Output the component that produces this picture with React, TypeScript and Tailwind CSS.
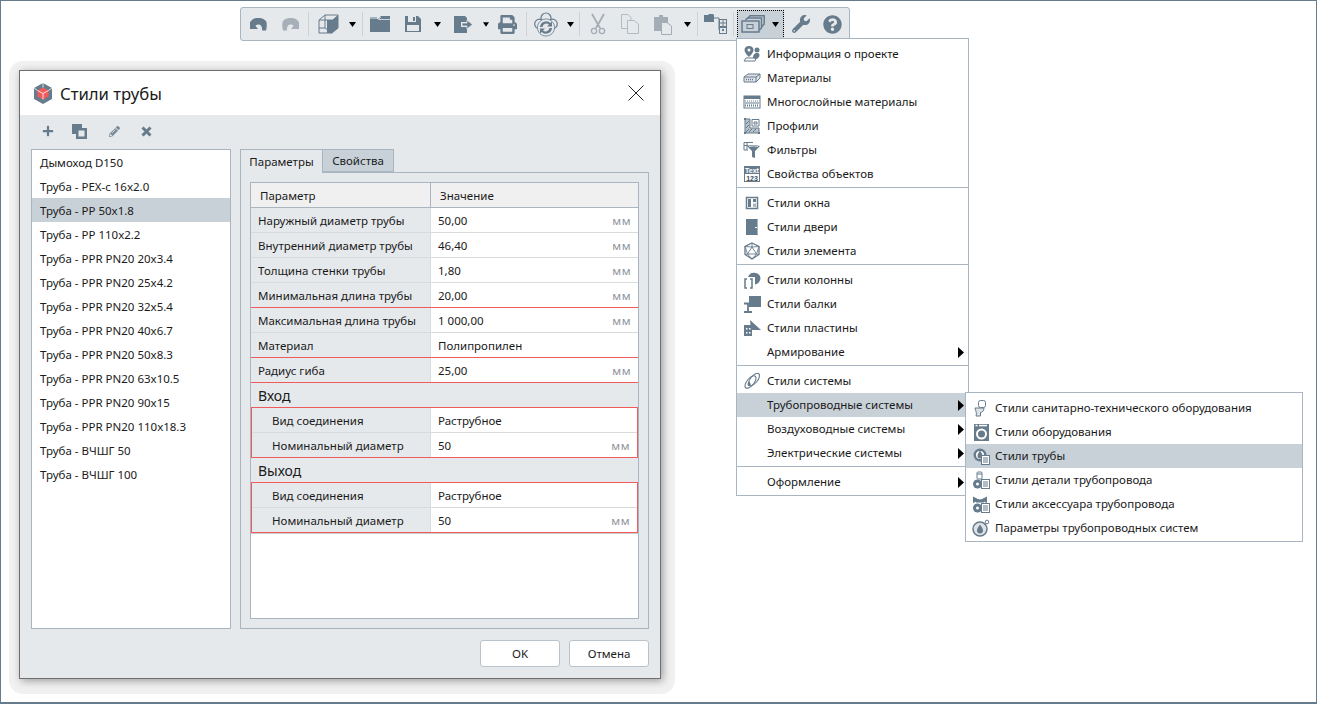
import type { ReactNode } from "react";
import { FaPrint, FaWrench, FaQuestionCircle, FaPlus, FaPencilAlt } from "react-icons/fa";

const C = "#667b8c";

const Svg = ({ w = 18, h = 18, vb, children }: { w?: number; h?: number; vb?: string; children: ReactNode }) => (
  <svg width={w} height={h} viewBox={vb ?? `0 0 ${w} ${h}`} fill="none" className="block shrink-0">
    {children}
  </svg>
);

// toolbar icons
const Undo = ({ color = C, flip = false }: { color?: string; flip?: boolean }) => (
  <svg width="17" height="13" viewBox="0 0 17 13" className={flip ? "block -scale-x-100" : "block"}>
    <path fill={color} d="M0 4 L3 1 C7 -1 13 -0.5 16 3 C17 5 17 9 16 12.5 L12 12.5 C12.5 9 11 6.5 8.500 6.500 C7 6.500 6 7 5.500 8 L8 11 L0 11 Z" />
  </svg>
);
const Box3d = () => (
  <Svg w={21} h={20}>
    <path d="M1 6 L7 1 H20 V14 L14 19 H1 Z M7 1 V14 H1 M7 14 L14 19 M1 6 H14 V19" stroke={C} strokeWidth="1" />
    <path d="M9 6 L14 6 L20 1 V14 L14 19 H9 Z" fill={C} />
  </Svg>
);
const Folder = () => (
  <Svg w={20} h={16}>
    <path d="M0 3 V16 H20 V0 H11 L8 3 Z" fill={C} />
    <path d="M0 2 H7" stroke={C} />
    <path d="M11 1 L8.500 3.500 H20" stroke="#e6e9ec" strokeWidth="0.8" />
  </Svg>
);
const Floppy = () => (
  <Svg w={16} h={16}>
    <path d="M0 0 H13 L16 3 V16 H0 Z" fill={C} />
    <rect x="3" y="0" width="8" height="6" fill="#e6e9ec" />
    <rect x="8" y="1" width="2" height="4" fill={C} />
    <rect x="2" y="9" width="12" height="6" fill="#e6e9ec" />
  </Svg>
);
const ExportIcon = () => (
  <Svg w={19} h={17}>
    <path d="M0 0 H11 L13 2 V6 H7 V11 H13 V17 H0 Z" fill={C} />
    <path d="M8 7 H13 V4 L18.500 8.500 L13 13 V10 H8 Z" fill={C} stroke="#e6e9ec" strokeWidth="0.8" />
  </Svg>
);
const CloudSync = () => (
  <Svg w={24} h={25}>
    <g stroke={C} strokeWidth="1.200" fill="#e6e9ec">
      <circle cx="12" cy="6" r="5" />
      <circle cx="5.500" cy="12" r="4.800" />
      <circle cx="18.500" cy="12" r="4.800" />
    </g>
    <circle cx="12" cy="15.500" r="8.600" fill="#e6e9ec" stroke={C} strokeWidth="0.800" />
    <path d="M6 15 A6.200 6.200 0 0 1 16.500 11 L18 9.500 V14.500 H13 L15 12.500 A4 4 0 0 0 8.500 15 Z" fill={C} />
    <path d="M18 16 A6.200 6.200 0 0 1 7.500 20 L6 21.500 V16.500 H11 L9 18.500 A4 4 0 0 0 15.500 16 Z" fill={C} />
  </Svg>
);
const ScissorsIcon = () => (
  <Svg w={16} h={22}>
    <path d="M2 1 L10 15 M14 1 L6 15" stroke="#a4adb5" strokeWidth="1.800" />
    <circle cx="4" cy="18" r="2.600" stroke="#a4adb5" strokeWidth="1.400" />
    <circle cx="12" cy="18" r="2.600" stroke="#a4adb5" strokeWidth="1.400" />
  </Svg>
);
const CopyIcon = () => (
  <Svg w={18} h={20}>
    <path d="M0.500 0.500 H7 L10 3.500 V14.500 H0.500 Z" stroke="#b3bbc2" fill="#e6e9ec" />
    <path d="M6.500 6.500 H13 L17.500 10 V19.500 H6.500 Z" stroke="#b3bbc2" fill="#e6e9ec" />
  </Svg>
);
const PasteIcon = () => (
  <Svg w={18} h={21}>
    <path d="M0 3 H5 V1 H9 V3 H14 V17 H0 Z" fill="#a4adb5" />
    <path d="M7.500 8.500 H13 L17.500 12 V20.500 H7.500 Z" fill="#e6e9ec" stroke="#a4adb5" />
  </Svg>
);
const TreeIcon = () => (
  <Svg w={23} h={20}>
    <path d="M0 1 H4 L5 0 H9 L10 1 V8 H0 Z" fill={C} />
    <path d="M10 4 H15 V16 H16 M15 10 H16" stroke={C} />
    <rect x="15.500" y="5.500" width="7" height="7" stroke={C} fill="#e6e9ec" />
    <path d="M15.500 9 H22.500 M19 5.500 V12.500" stroke={C} />
    <rect x="15.500" y="13.500" width="7" height="6" stroke={C} fill="#e6e9ec" />
    <rect x="18" y="15" width="2" height="2" fill={C} />
  </Svg>
);
const StackIcon = () => (
  <Svg w={24} h={18}>
    <path d="M7 3 L9 0.800 H23.200 V9 L20.500 12" stroke={C} strokeWidth="1.500" />
    <path d="M4.500 5 L6.500 3 H20.500 V13 L18.500 15" stroke={C} strokeWidth="1.500" />
    <rect x="1" y="6" width="17" height="11" fill="#c9d1d8" stroke={C} strokeWidth="1.500" />
    <rect x="6" y="9.500" width="6" height="4" stroke={C} />
  </Svg>
);

const Arrow = () => (
  <svg width="7" height="5" viewBox="0 0 7 5" className="block">
    <path d="M0 0 H7 L3.500 5 Z" fill="#000" />
  </svg>
);

const Tb = ({ w, children }: { w: string; children?: ReactNode }) => (
  <div className={`${w} h-full flex items-center justify-center shrink-0`}>{children}</div>
);
const TbSep = ({ w }: { w: string }) => (
  <div className={`${w} h-full flex items-center justify-center shrink-0`}>
    <div className="w-px h-[24px] bg-[#ccd2d8]" />
  </div>
);

const Toolbar = () => (
  <div className="ml-[239px] mt-[6px] w-[610px] h-[34px] flex pl-[1px] items-center bg-[#e6e9ec] border border-[#a9b5c0] rounded-[3px]">
    <Tb w="w-[32px]"><Undo /></Tb>
    <Tb w="w-[32px]"><Undo color="#a7b0b8" flip /></Tb>
    <TbSep w="w-[4px]" />
    <Tb w="w-[36px]"><Box3d /></Tb>
    <Tb w="w-[12px]"><Arrow /></Tb>
    <TbSep w="w-[8px]" />
    <Tb w="w-[28px]"><Folder /></Tb>
    <Tb w="w-[38px]"><Floppy /></Tb>
    <Tb w="w-[11px]"><Arrow /></Tb>
    <Tb w="w-[40px]"><ExportIcon /></Tb>
    <Tb w="w-[6px]"><Arrow /></Tb>
    <Tb w="w-[36px]"><FaPrint size={19} color={C} /></Tb>
    <TbSep w="w-[2px]" />
    <Tb w="w-[38px]"><CloudSync /></Tb>
    <Tb w="w-[10px]"><Arrow /></Tb>
    <TbSep w="w-[8px]" />
    <Tb w="w-[30px]"><ScissorsIcon /></Tb>
    <Tb w="w-[34px]"><CopyIcon /></Tb>
    <Tb w="w-[32px]"><PasteIcon /></Tb>
    <Tb w="w-[16px]"><Arrow /></Tb>
    <TbSep w="w-[4px]" />
    <Tb w="w-[32px]"><TreeIcon /></Tb>
    <TbSep w="w-[4px]" />
    <div className="ml-[2px] w-[47px] h-[29px] shrink-0 flex items-center bg-[#c9d1d8] border border-dotted border-black pl-[3px] gap-[7px]">
      <StackIcon />
      <Arrow />
    </div>
    <Tb w="w-[34px]"><FaWrench size={18} color={C} /></Tb>
    <Tb w="w-[28px]"><FaQuestionCircle size={19} color={C} /></Tb>
  </div>
);

// menu icons
const iconPin = (
  <Svg>
    <path d="M6 1 C3 1 1.500 3 1.500 5 C1.500 8 6 12 6 12 C6 12 10.500 8 10.500 5 C10.500 3 9 1 6 1 Z M6 3.500 A1.500 1.500 0 1 1 6 6.500 A1.500 1.500 0 1 1 6 3.500 Z" fill={C} fillRule="evenodd" />
    <path d="M1 16 H12 L13 13 H3 Z" fill="none" stroke={C} />
    <circle cx="14" cy="5" r="2.500" fill={C} />
    <path d="M10 13 C10 9 12 8 14 8 C16.500 8 17 10 16 12 L14 14 Z" fill={C} />
  </Svg>
);
const iconMaterial = (
  <Svg>
    <path d="M1 8 L5 5 H17 V9 L13 13 H1 Z" fill="#dfe3e7" stroke={C} />
    <path d="M1 8 H13 L17 5 M13 8 V13" stroke={C} />
    <path d="M3 10.500 H11" stroke={C} strokeWidth="1.500" strokeDasharray="1 1" />
  </Svg>
);
const iconLayers = (
  <Svg>
    <rect x="1" y="3" width="16" height="12" fill="#fff" stroke={C} />
    <rect x="1" y="3" width="16" height="3" fill={C} />
    <path d="M2 8 H16" stroke={C} strokeDasharray="1 1" />
    <path d="M2 10 H16" stroke={C} />
    <path d="M2 12.500 H16" stroke={C} strokeWidth="2" strokeDasharray="1 1" />
  </Svg>
);
const iconProfile = (
  <Svg>
    <path d="M2 2 H7 V11 H16 V16 H2 Z" fill="#b9c2ca" stroke={C} />
    <path d="M3 15 L6 12 M6 15 L9 12 M10 15 L13 12 M3 11 L6 8 M3 7 L6 4" stroke={C} />
    <path d="M9 2.500 H16 V9 H9 Z M11 5 H14 V7 H11 Z" stroke={C} />
    <rect x="1" y="1" width="2" height="2" fill={C} /><rect x="15" y="15" width="2" height="2" fill={C} /><rect x="1" y="15" width="2" height="2" fill={C} />
  </Svg>
);
const iconFilter = (
  <Svg>
    <path d="M1 1.500 H10 M1 1.500 V9 H5 M1 4.500 H5 M4 1.500 V9" stroke={C} />
    <path d="M4 5 C6 3.500 14 3.500 17 5 L12 10 V17 L9 16 V10 Z" fill={C} />
    <path d="M6 5.500 C8 4.800 13 4.800 15 5.500" stroke="#fff" strokeWidth="0.800" />
  </Svg>
);
const iconProps = (
  <Svg>
    <rect x="1" y="1" width="16" height="16" fill={C} />
    <rect x="2" y="9" width="14" height="7" fill="#fff" />
    <text x="9" y="7.500" textAnchor="middle" fontSize="7" fontWeight="700" fill="#fff" fontFamily="'Liberation Sans', sans-serif">Text</text>
    <text x="9" y="15.500" textAnchor="middle" fontSize="7" fontWeight="700" fill="#3e4d59" fontFamily="'Liberation Sans', sans-serif">123</text>
  </Svg>
);
const iconWindow = (
  <Svg>
    <rect x="3.500" y="3.500" width="11" height="11" stroke={C} fill="#fff" strokeWidth="1.500" />
    <rect x="5" y="5" width="3" height="8" fill={C} />
    <rect x="10" y="5" width="3" height="3" fill={C} />
    <rect x="10" y="9.500" width="3" height="3.500" fill="#a9b5c0" />
  </Svg>
);
const iconDoor = (
  <Svg>
    <rect x="3" y="1" width="12" height="16" fill={C} />
    <rect x="12" y="9" width="2" height="1" fill="#fff" />
    <path d="M14.500 1.500 V16.500" stroke="#a9b5c0" />
  </Svg>
);
const iconIco = (
  <Svg>
    <path d="M9 1 L16 4.500 V12.500 L9 17 L2 12.500 V4.500 Z" stroke={C} strokeWidth="1.300" />
    <path d="M9 5 L13.500 12 H4.500 Z M9 1 V5 M2 4.500 L9 5 L16 4.500 M2 4.500 L4.500 12 L2 12.500 M16 4.500 L13.500 12 L16 12.500 M4.500 12 L9 17 L13.500 12" stroke={C} strokeWidth="0.900" />
  </Svg>
);
const iconColumn = (
  <Svg>
    <path d="M5 6 A6.500 6.500 0 0 1 17.500 7 A6.500 6.500 0 0 1 12 13.500 V6 Z" fill={C} />
    <path d="M4 8 H2 V17 H4 M7 8 H9 V17 H7" stroke={C} strokeWidth="1.500" />
  </Svg>
);
const iconBeam = (
  <Svg>
    <rect x="6" y="1" width="12" height="11" fill={C} />
    <path d="M1 8.500 H9 M1 17 H9 M5 8.500 V17" stroke={C} strokeWidth="1.800" />
  </Svg>
);
const iconPlate = (
  <Svg>
    <path d="M7 1 L18 11 H8 Z" fill={C} />
    <path d="M1 6 H9 V17 H1 Z" fill={C} />
    <rect x="3" y="9" width="1.500" height="1.500" fill="#fff" /><rect x="6" y="9" width="1.500" height="1.500" fill="#fff" />
    <rect x="3" y="13" width="1.500" height="1.500" fill="#fff" /><rect x="6" y="13" width="1.500" height="1.500" fill="#fff" />
  </Svg>
);
const iconChain = (
  <Svg>
    <g stroke={C} strokeWidth="1.100">
      <ellipse cx="7.500" cy="10" rx="3.500" ry="7.500" transform="rotate(40 7.500 10)" />
      <ellipse cx="11" cy="7.500" rx="3.500" ry="7.500" transform="rotate(40 11 7.500)" />
    </g>
    <path d="M6 9 C4.800 11 4.500 11.500 4.500 12.500 A1.600 1.600 0 0 0 7.700 12.500 C7.700 11.500 7.200 11 6 9 Z" fill={C} />
  </Svg>
);
const Doc = () => (
  <g>
    <rect x="9.500" y="8.500" width="8" height="9" fill="#fff" stroke={C} />
    <path d="M11 11 H16 M11 13 H16 M11 15 H16" stroke={C} />
  </g>
);
const iconToilet = (
  <Svg>
    <rect x="6.500" y="1.500" width="7" height="7" rx="2" stroke={C} />
    <path d="M3 9 H12 C12 12 10 13.500 8.500 13.500 V17 H4 C5 15 4 12.500 3 9 Z" fill="#dfe3e7" stroke={C} />
  </Svg>
);
const iconWasher = (
  <Svg>
    <rect x="2" y="1" width="15" height="17" fill={C} />
    <rect x="3.500" y="1.800" width="2" height="1.500" fill="#fff" /><rect x="7" y="1.800" width="8" height="1.500" fill="#fff" />
    <circle cx="9.500" cy="11" r="5.500" fill="#fff" />
    <circle cx="9.500" cy="11" r="3.500" fill={C} />
  </Svg>
);
const iconPipe = (
  <Svg>
    <circle cx="8" cy="8" r="6.500" fill={C} />
    <circle cx="8" cy="8" r="4" fill="#fff" />
    <path d="M8 3.500 C6 6.500 5.500 7.500 5.500 9 A2.500 2.500 0 0 0 10.500 9 C10.500 7.500 10 6.500 8 3.500 Z" fill={C} />
    <Doc />
  </Svg>
);
const iconDetail = (
  <Svg>
    <rect x="5" y="1" width="5" height="7" rx="1" stroke={C} />
    <path d="M5 3 H10" stroke={C} />
    <circle cx="5.500" cy="13" r="4.500" fill={C} />
    <circle cx="5.500" cy="13" r="1.500" fill="#fff" />
    <Doc />
  </Svg>
);
const iconAccessory = (
  <Svg>
    <path d="M1 1.500 L8 5 L15 1.500 V8 L8 5 L1 8 Z" fill={C} />
    <rect x="4" y="4.500" width="8" height="3" fill={C} />
    <circle cx="5.500" cy="13" r="4.500" fill={C} />
    <circle cx="5.500" cy="13" r="1.500" fill="#fff" />
    <Doc />
  </Svg>
);
const iconDrop = (
  <Svg>
    <circle cx="8" cy="10" r="7" fill="#dfe3e7" stroke={C} strokeWidth="1.500" />
    <path d="M8 5.500 C6 8.500 5 10 5 11.500 A3 3 0 0 0 11 11.500 C11 10 10 8.500 8 5.500 Z" fill={C} />
    <circle cx="15" cy="3" r="1.800" stroke={C} />
    <path d="M13 5 L12 6" stroke={C} />
  </Svg>
);

const SubArrow = () => (
  <svg width="6" height="11" viewBox="0 0 6 11" className="block">
    <path d="M0 0 L6 5.500 L0 11 Z" fill="#000" />
  </svg>
);

type Item = { label?: string; icon?: ReactNode; sub?: boolean; active?: boolean; sep?: boolean };

const mainMenu: Item[] = [
  { label: "Информация о проекте", icon: iconPin },
  { label: "Материалы", icon: iconMaterial },
  { label: "Многослойные материалы", icon: iconLayers },
  { label: "Профили", icon: iconProfile },
  { label: "Фильтры", icon: iconFilter },
  { label: "Свойства объектов", icon: iconProps },
  { sep: true },
  { label: "Стили окна", icon: iconWindow },
  { label: "Стили двери", icon: iconDoor },
  { label: "Стили элемента", icon: iconIco },
  { sep: true },
  { label: "Стили колонны", icon: iconColumn },
  { label: "Стили балки", icon: iconBeam },
  { label: "Стили пластины", icon: iconPlate },
  { label: "Армирование", sub: true },
  { sep: true },
  { label: "Стили системы", icon: iconChain },
  { label: "Трубопроводные системы", sub: true, active: true },
  { label: "Воздуховодные системы", sub: true },
  { label: "Электрические системы", sub: true },
  { sep: true },
  { label: "Оформление", sub: true },
];

const subMenu: Item[] = [
  { label: "Стили санитарно-технического оборудования", icon: iconToilet },
  { label: "Стили оборудования", icon: iconWasher },
  { label: "Стили трубы", icon: iconPipe, active: true },
  { label: "Стили детали трубопровода", icon: iconDetail },
  { label: "Стили аксессуара трубопровода", icon: iconAccessory },
  { label: "Параметры трубопроводных систем", icon: iconDrop },
];

const MenuRow = ({ item, iconW }: { item: Item; iconW: string }) => {
  if (item.sep) return <div className="h-px bg-[#a9b5c0] mt-px mb-[3px]" />;
  return (
    <div className={`h-[24px] flex items-center relative ${item.active ? "bg-[#c9d1d8]" : ""}`}>
      <div className={`${iconW} flex justify-center shrink-0`}>{item.icon}</div>
      <span>{item.label}</span>
      {item.sub && (
        <div className="absolute right-[4px] top-[7px]">
          <SubArrow />
        </div>
      )}
    </div>
  );
};

// table
type RowProps = { label: string; value: string; unit?: boolean; red?: boolean; indent?: boolean };

const Row = ({ label, value, unit = true, red, indent }: RowProps) => (
  <div className={`h-[25px] flex border-b ${red ? "border-[#f05a5a]" : "border-[#d9dcdf]"}`}>
    <div className={`shrink-0 bg-[#e6e9ec] pt-px flex items-center border-r border-[#d9dcdf] ${indent ? "w-[179px] pl-[20px]" : "w-[180px] pl-[7px]"}`}>{label}</div>
    <div className="flex-1 flex items-center justify-between pt-px pl-[7px] pr-[7px] bg-white">
      <span>{value}</span>
      {unit && <span className="text-[#8e959b] tracking-[0.5px]">мм</span>}
    </div>
  </div>
);

const Section = ({ title }: { title: string }) => (
  <div className="h-[25px] bg-[#e6e9ec] border-b border-[#f05a5a] pl-[7px] flex items-center text-[14px]">{title}</div>
);

const pipes = [
  "Дымоход D150",
  "Труба - PEX-c 16x2.0",
  "Труба - PP 50x1.8",
  "Труба - PP 110x2.2",
  "Труба - PPR PN20 20x3.4",
  "Труба - PPR PN20 25x4.2",
  "Труба - PPR PN20 32x5.4",
  "Труба - PPR PN20 40x6.7",
  "Труба - PPR PN20 50x8.3",
  "Труба - PPR PN20 63x10.5",
  "Труба - PPR PN20 90x15",
  "Труба - PPR PN20 110x18.3",
  "Труба - ВЧШГ 50",
  "Труба - ВЧШГ 100",
];

const Dialog = () => (
  <div className="absolute left-[8px] top-[60px] w-[666px] h-[633px] bg-[#f1f1f1] rounded-[14px] pl-[10px] pt-[9px]">
    <div className="w-[642px] h-[609px] flex flex-col bg-[#e6e9ec] border border-[#6e6e6e] shadow-[2px_2px_8px_rgba(0,0,0,0.35)]">
      <div className="h-[44px] bg-white flex items-center shrink-0 pl-[13px] pr-[16px]">
        <svg width="20" height="21" viewBox="0 0 20 21" className="block shrink-0">
          <path d="M10 0 L19 5 V16 L10 21 L1 16 V5 Z" fill="#667b8c" />
          <path d="M10 4.500 L15.500 7.500 V13.500 L10 16.500 L4.500 13.500 V7.500 Z" fill="#f15a5a" />
          <path d="M10 10.500 L10 16.500 M10 10.500 L4.500 7.500 M10 10.500 L15.500 7.500 M10 0 V4.500 M1 5 L4.500 7.500 M19 5 L15.500 7.500" stroke="#fff" strokeWidth="0.800" />
        </svg>
        <span className="ml-[7px] pt-px text-[16.7px]">Стили трубы</span>
        <svg width="16" height="16" viewBox="0 0 16 16" className="block ml-auto">
          <path d="M0.500 0.500 L15.500 15.500 M15.500 0.500 L0.500 15.500" stroke="#222" strokeWidth="1" />
        </svg>
      </div>
      <div className="h-[34px] flex items-center shrink-0 pl-[22px] pb-[2px]">
        <FaPlus size={12} color={C} />
        <svg width="15" height="15" viewBox="0 0 15 15" className="block ml-[18px]">
          <path d="M0 0 H10 V4 H15 V15 H4 V10 H0 Z" fill={C} />
          <rect x="6.500" y="6.500" width="6" height="6" fill="#e6e9ec" />
        </svg>
        <div className="ml-[22px]">
          <FaPencilAlt size={11} color="#7a8c9a" />
        </div>
        <svg width="11" height="11" viewBox="0 0 11 11" className="block ml-[21px]">
          <path d="M1.500 1.500 L9.500 9.500 M9.500 1.500 L1.500 9.500" stroke={C} strokeWidth="3" />
        </svg>
      </div>
      <div className="flex pl-[11px] pr-[11px] shrink-0">
        <div className="w-[200px] h-[480px] bg-white border border-[#a9b5c0] shrink-0">
          {pipes.map((p) => (
            <div key={p} className={`h-[24px] pl-[8px] pt-px flex items-center ${p === "Труба - PP 50x1.8" ? "bg-[#c9d1d8]" : ""}`}>
              {p}
            </div>
          ))}
        </div>
        <div className="ml-[9px] flex-1 flex flex-col">
          <div className="flex h-[23px] shrink-0">
            <div className="w-[83px] h-[24px] pt-px z-10 bg-[#e6e9ec] border border-b-0 border-[#a9b5c0] flex items-center justify-center">Параметры</div>
            <div className="w-[71px] pt-px bg-[#c9d1d8] border border-l-0 border-[#a9b5c0] flex items-center justify-center">Свойства</div>
          </div>
          <div className="w-[409px] h-[457px] border border-[#a9b5c0] p-[9px]">
            <div className="h-[437px] bg-white border border-[#a9b5c0]">
              <div className="h-[25px] flex bg-[#f0f0f0] border-b border-[#a9b5c0]">
                <div className="w-[180px] pl-[9px] pt-px flex items-center border-r border-[#a9b5c0]">Параметр</div>
                <div className="pl-[9px] pt-px flex items-center">Значение</div>
              </div>
              <Row label="Наружный диаметр трубы" value="50,00" />
              <Row label="Внутренний диаметр трубы" value="46,40" />
              <Row label="Толщина стенки трубы" value="1,80" />
              <Row label="Минимальная длина трубы" value="20,00" red />
              <Row label="Максимальная длина трубы" value="1 000,00" />
              <Row label="Материал" value="Полипропилен" unit={false} red />
              <Row label="Радиус гиба" value="25,00" red />
              <Section title="Вход" />
              <div className="border-x border-[#f05a5a]">
                <Row label="Вид соединения" value="Раструбное" unit={false} indent />
                <Row label="Номинальный диаметр" value="50" red indent />
              </div>
              <Section title="Выход" />
              <div className="border-x border-[#f05a5a]">
                <Row label="Вид соединения" value="Раструбное" unit={false} indent />
                <Row label="Номинальный диаметр" value="50" red indent />
              </div>
              <div className="h-px bg-[#c9cdd1]" />
            </div>
          </div>
        </div>
      </div>
      <div className="flex-1 flex justify-end gap-[9px] pr-[11px] pt-[11px]">
        <button className="w-[80px] h-[27px] bg-white border border-[#b9c3cc] rounded-[3px]">OK</button>
        <button className="w-[80px] h-[27px] bg-white border border-[#b9c3cc] rounded-[3px]">Отмена</button>
      </div>
    </div>
  </div>
);

export default function App() {
  return (
    <div className="relative w-[1317px] h-[704px] overflow-hidden bg-white border border-b-2 border-[#667b8c] text-[11.5px] text-[#1a1a1a] [font-family:'Noto_Sans',sans-serif]">
      <Toolbar />
      <Dialog />
      <div className="absolute left-[735px] top-[37px] w-[233px] h-[458px] bg-white border border-[#a9b5c0] pt-[3px]">
        {mainMenu.map((m, i) => (
          <MenuRow key={i} item={m} iconW="w-[30px]" />
        ))}
      </div>
      <div className="absolute left-[964px] top-[391px] w-[338px] h-[150px] bg-white border border-[#a9b5c0] pt-[3px]">
        {subMenu.map((m, i) => (
          <MenuRow key={i} item={m} iconW="w-[29px]" />
        ))}
      </div>
    </div>
  );
}
